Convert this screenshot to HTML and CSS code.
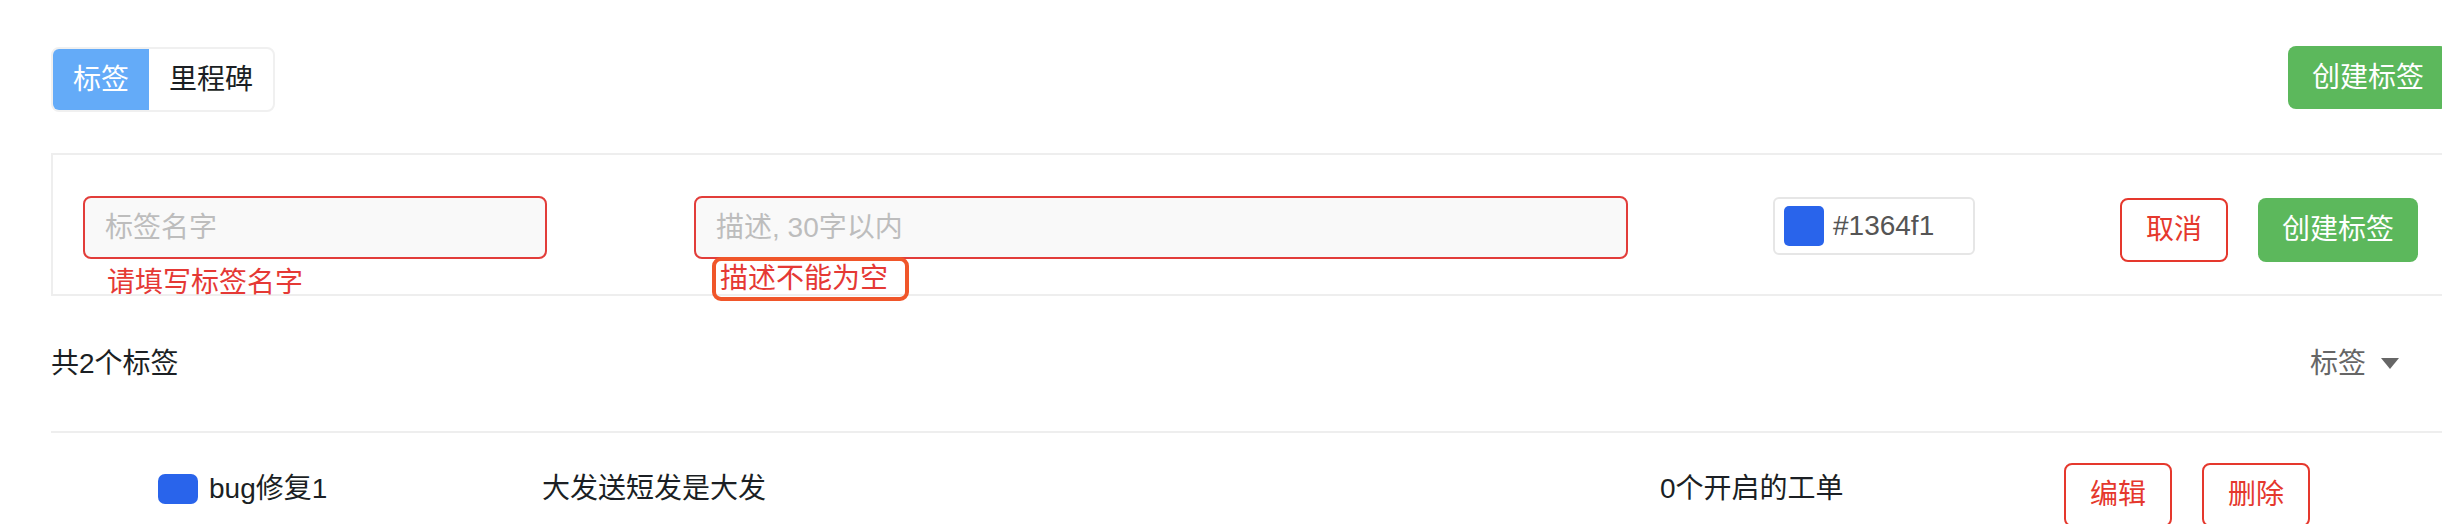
FILE: index.html
```html
<!DOCTYPE html>
<html lang="zh-CN">
<head>
  <meta charset="UTF-8" />
  <meta name="viewport" content="width=device-width, initial-scale=1.0"/>
  <title>标签管理</title>
  <link rel="stylesheet" href="styles.css">
</head>
<body>
  <div class="page">
    <div class="top-bar">
      <div class="tabs">
        <span class="tab active">标签</span>
        <span class="tab">里程碑</span>
      </div>
      <button class="btn btn-green">创建标签</button>
    </div>

    <form class="label-form" autocomplete="off">
      <div class="field field-name">
        <input type="text" class="text-input" placeholder="标签名字">
        <div class="error-msg">请填写标签名字</div>
      </div>
      <div class="field field-desc">
        <input type="text" class="text-input" placeholder="描述, 30字以内">
        <div class="error-msg boxed">描述不能为空</div>
      </div>
      <div class="color-pick">
        <span class="swatch"></span>
        <span class="color-code">#1364f1</span>
      </div>
      <div class="form-actions">
        <button type="button" class="btn btn-outline">取消</button>
        <button type="submit" class="btn btn-green">创建标签</button>
      </div>
    </form>

    <div class="summary">
      <span class="count">共2个标签</span>
      <span class="sort">标签 <i class="caret"></i></span>
    </div>

    <div class="label-row">
      <div class="label-name"><span class="swatch small"></span>bug修复1</div>
      <div class="label-desc">大发送短发是大发</div>
      <div class="label-issues">0个开启的工单</div>
      <div class="row-actions">
        <button class="btn btn-outline">编辑</button>
        <button class="btn btn-outline">删除</button>
      </div>
    </div>
  </div>
</body>
</html>
```

FILE: styles.css
```css
/* Base reset */
* { box-sizing: border-box; margin: 0; padding: 0; }
body {
  font-family: "Liberation Sans", "Noto Sans CJK SC", sans-serif;
  font-size: 28px;
  line-height: 36px;
  color: #1b1f24;
  background: #fff;
  overflow: hidden;
}
.page { width: 2397px; margin-left: 51px; }

/* Top bar */
.top-bar {
  display: flex;
  justify-content: space-between;
  align-items: flex-start;
  padding-top: 46px;
}
.tabs {
  display: flex;
  margin-top: 1px;
  border: 2px solid #f0f0f0;
  border-radius: 8px;
  overflow: hidden;
}
.tab { padding: 13px 20px 12px; }
.tab.active { background: #64abf8; color: #fff; }

/* Buttons */
.btn {
  font: inherit;
  height: 64px;
  padding: 0 24px;
  border-radius: 8px;
  border: none;
  cursor: pointer;
}
.btn-green { background: #5cb85c; color: #fff; }
.top-bar .btn-green { height: 63px; }
.btn-outline { background: #fff; color: #e5382d; border: 2px solid #e5382d; }

/* Create form */
.label-form {
  display: flex;
  align-items: flex-start;
  margin-top: 41px;
  padding: 41px 30px 32px;
  border: 2px solid #eee;
  border-right: none;
}
.field { display: flex; flex-direction: column; height: 63px; }
.field > * { flex-shrink: 0; }
.field-name { width: 464px; }
.field-desc { width: 934px; margin-left: 147px; }
.text-input {
  font: inherit;
  height: 63px;
  padding: 0 20px;
  background: #f9f9f9;
  border: 2px solid #e23d3a;
  border-radius: 8px;
  color: #333;
  outline: none;
}
.text-input::placeholder { color: #bdbdbd; }
.error-msg { color: #e53935; margin-top: 6px; padding-left: 24px; }
.error-msg.boxed {
  align-self: flex-start;
  margin: -2px 0 0 18px;
  padding: 0 17px 0 4px;
  border: 4px solid #f0562a;
  border-radius: 9px;
}
.color-pick {
  display: flex;
  align-items: center;
  gap: 9px;
  width: 202px;
  height: 58px;
  margin: 1px 0 0 145px;
  padding: 0 9px;
  border: 2px solid #e6e6e6;
  border-radius: 6px;
}
.swatch {
  width: 40px; height: 40px;
  border-radius: 5px;
  background: #2964eb;
}
.color-code { color: #555; }
.form-actions { display: flex; gap: 30px; margin: 2px 0 0 auto; }

/* List */
.summary {
  display: flex;
  justify-content: space-between;
  align-items: center;
  height: 137px;
  padding-right: 49px;
  border-bottom: 2px solid #eee;
}
.sort { display: flex; align-items: center; color: #666; }
.caret {
  margin-left: 15px;
  border-left: 9px solid transparent;
  border-right: 9px solid transparent;
  border-top: 11px solid #666;
}
.label-row {
  display: flex;
  align-items: flex-start;
  padding: 24px 0 0 107px;
}
.label-name, .label-desc, .label-issues { margin-top: 14px; }
.label-name { display: flex; align-items: center; gap: 11px; width: 384px; }
.swatch.small { width: 40px; height: 30px; border-radius: 7px; }
.label-desc { width: 1118px; }
.label-issues { width: 404px; }
.row-actions { display: flex; gap: 30px; margin-top: 6px; }
```
